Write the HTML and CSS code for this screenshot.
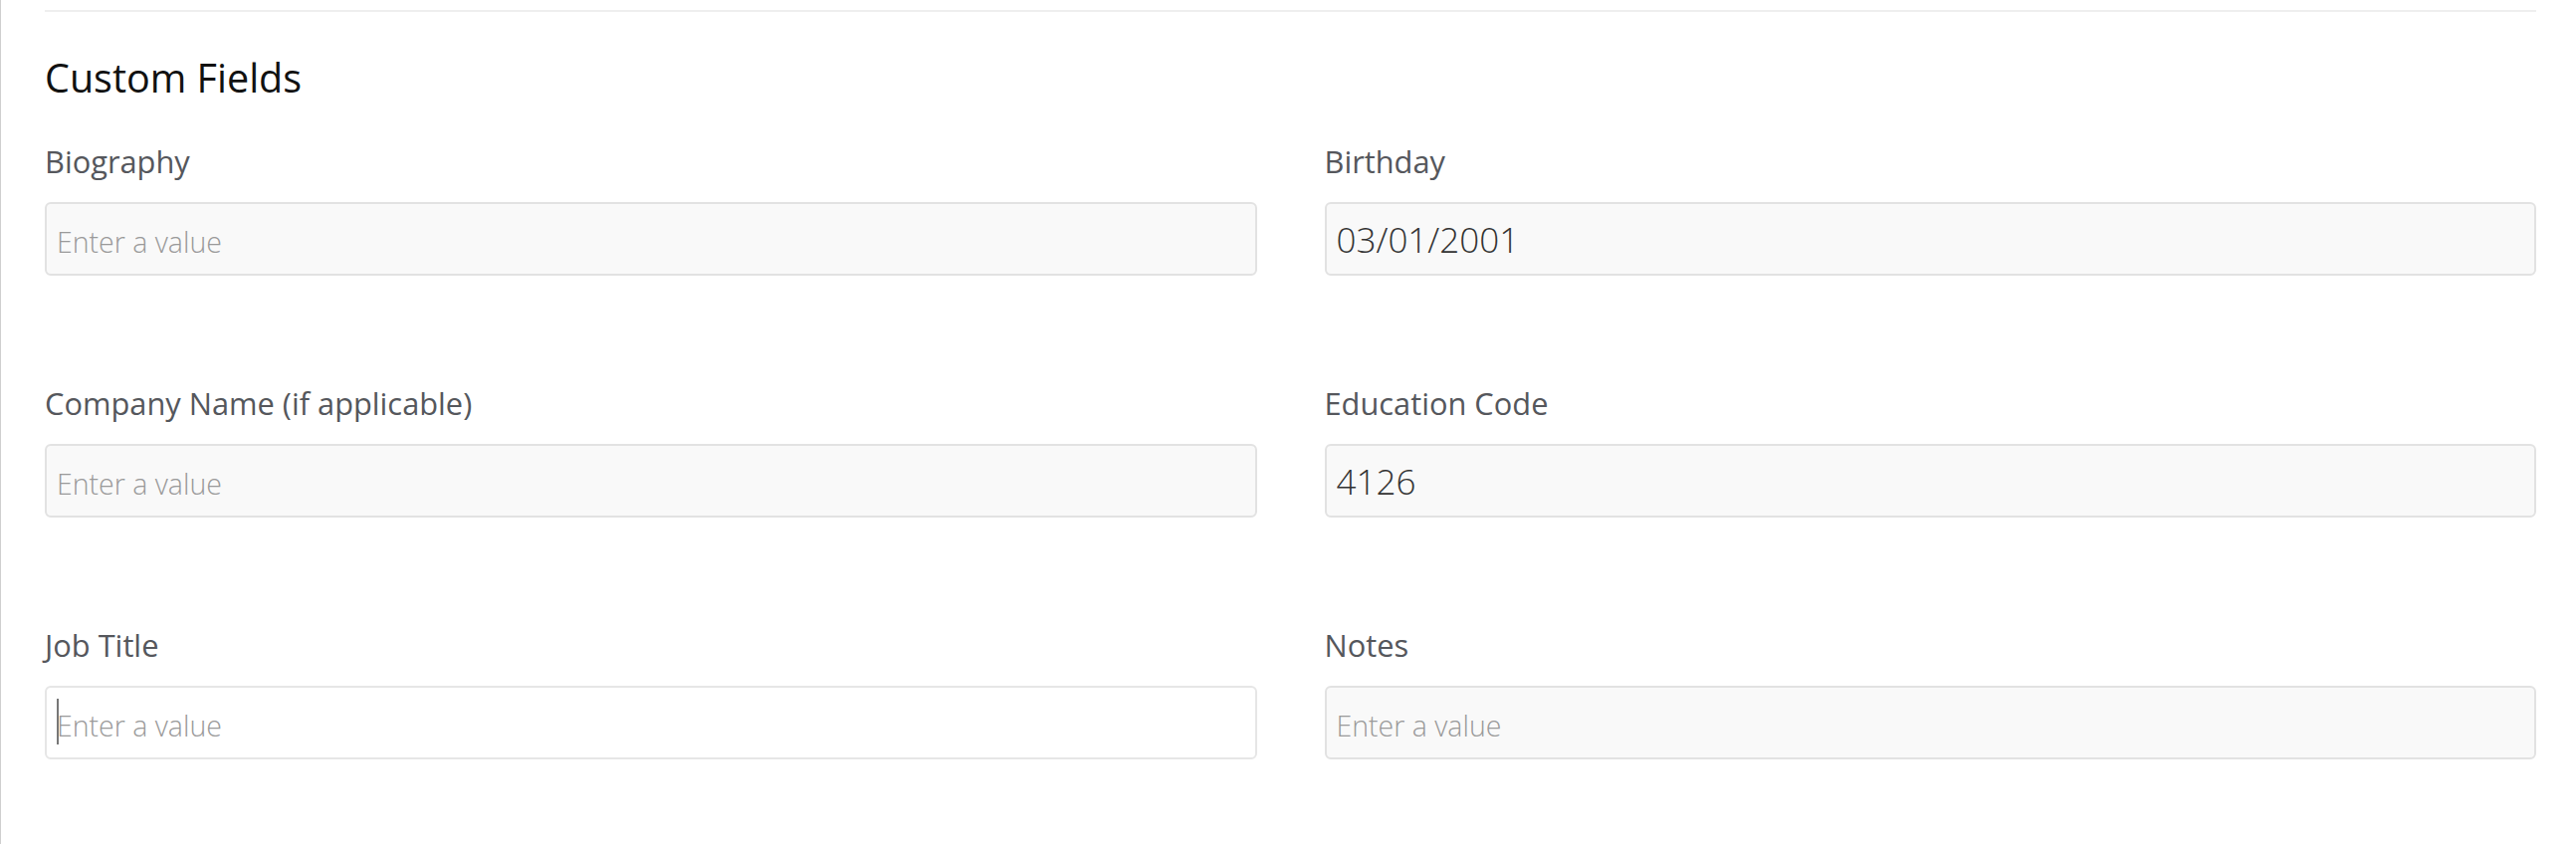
FILE: index.html
```html
<!DOCTYPE html>
<html lang="en">
  <head>
    <meta charset="UTF-8" />
    <title>Custom Fields</title>
    <link rel="stylesheet" href="styles.css">
  </head>
  <body>
    <div class="panel">
      <hr class="rule" />

      <h2>Custom Fields</h2>

      <div class="fields">
        <div class="field">
          <label for="biography">Biography</label>
          <input id="biography" placeholder="Enter a value" />
        </div>

        <div class="field">
          <label for="birthday">Birthday</label>
          <input id="birthday" value="03/01/2001" />
        </div>

        <div class="field">
          <label for="company">Company Name (if applicable)</label>
          <input id="company" placeholder="Enter a value" />
        </div>

        <div class="field">
          <label for="education">Education Code</label>
          <input id="education" value="4126" />
        </div>

        <div class="field">
          <label for="jobTitle">Job Title</label>
          <div class="input-wrap">
            <input id="jobTitle" class="focused" placeholder="Enter a value" />
            <span class="caret"></span>
          </div>
        </div>

        <div class="field">
          <label for="notes">Notes</label>
          <input id="notes" placeholder="Enter a value" />
        </div>
      </div>
    </div>
  </body>
</html>
```

FILE: styles.css
```css
body {
  margin: 0;
  font-family: 'Open Sans', 'Noto Sans', sans-serif;
  background: white;
  color: #333;
}

.panel {
  border-left: 1px solid #cfcfcf;
  padding: 10px 40px 0 44px;
  min-height: 100vh;
  box-sizing: border-box;
}

.rule {
  height: 2px;
  margin: 0;
  border: none;
  background-color: #eeeeee;
}

h2 {
  font-size: 39.5px;
  line-height: 56px;
  font-weight: 400;
  color: #111;
  margin: 38px 0 36px;
}

.fields {
  display: grid;
  grid-template-columns: 1fr 1fr;
  column-gap: 68px;
  row-gap: 108px;
}

.field label {
  display: block;
  font-size: 30.8px;
  line-height: 40px;
  color: #55575c;
  margin-bottom: 21px;
}

.field input {
  display: block;
  width: 100%;
  height: 74px;
  box-sizing: border-box;
  padding: 0 10px;
  border: 2px solid #e2e2e2;
  border-radius: 6px;
  background-color: #f9f9f9;
  font-family: inherit;
  font-size: 35px;
  font-weight: 300;
  color: #333;
  outline: none;
}

.field input::placeholder {
  font-size: 28.5px;
  font-weight: 300;
  color: #9a9a9a;
}

.field input.focused {
  background-color: white;
  border-color: #e6e6e6;
}

.input-wrap {
  position: relative;
}

.caret {
  position: absolute;
  left: 12px;
  top: 13px;
  width: 2px;
  height: 46px;
  background-color: #777;
}
```
